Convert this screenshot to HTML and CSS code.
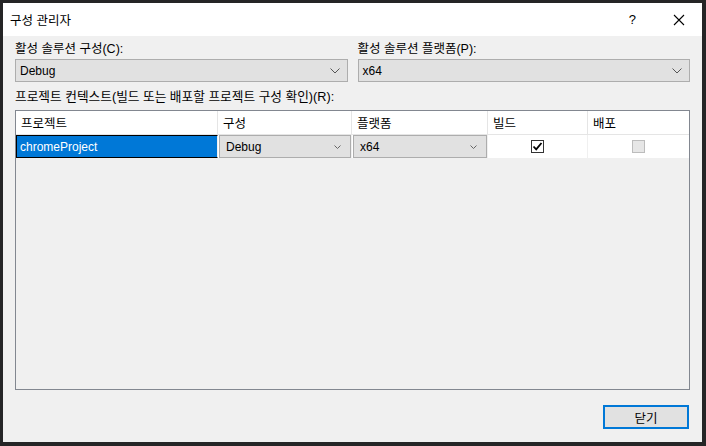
FILE: index.html
```html
<!DOCTYPE html>
<html lang="ko">
<head>
<meta charset="UTF-8">
<title>구성 관리자</title>
<link rel="stylesheet" href="styles.css">
</head>
<body>
  <div class="dialog">
    <!-- title bar -->
    <div class="titlebar">
      <span class="title">구성 관리자</span>
      <span class="help">?</span>
      <svg class="close" width="12" height="12" viewBox="0 0 12 12"><path d="M1 1 L11 11 M11 1 L1 11" stroke="#000" stroke-width="1.1" fill="none"/></svg>
    </div>

    <div class="content">
      <div class="fields">
        <div class="field">
          <label>활성 솔루션 구성(C):</label>
          <div class="select">
            <span>Debug</span>
            <svg width="10" height="6" viewBox="0 0 10 6"><path d="M0.5 0.5 L5 5 L9.5 0.5" stroke="#555" fill="none"/></svg>
          </div>
        </div>
        <div class="field">
          <label>활성 솔루션 플랫폼(P):</label>
          <div class="select">
            <span>x64</span>
            <svg width="10" height="6" viewBox="0 0 10 6"><path d="M0.5 0.5 L5 5 L9.5 0.5" stroke="#555" fill="none"/></svg>
          </div>
        </div>
      </div>

      <label class="context-label">프로젝트 컨텍스트(빌드 또는 배포할 프로젝트 구성 확인)(R):</label>

      <div class="grid">
        <div class="row header">
          <div class="cell">프로젝트</div>
          <div class="cell">구성</div>
          <div class="cell">플랫폼</div>
          <div class="cell">빌드</div>
          <div class="cell">배포</div>
        </div>
        <div class="row data">
          <div class="cell selected">chromeProject</div>
          <div class="cell">
            <div class="combo">
              <span>Debug</span>
              <svg width="7" height="4" viewBox="0 0 7 4"><path d="M0.5 0.5 L3.5 3.5 L6.5 0.5" stroke="#666" fill="none"/></svg>
            </div>
          </div>
          <div class="cell">
            <div class="combo">
              <span>x64</span>
              <svg width="7" height="4" viewBox="0 0 7 4"><path d="M0.5 0.5 L3.5 3.5 L6.5 0.5" stroke="#666" fill="none"/></svg>
            </div>
          </div>
          <div class="cell center">
            <div class="check checked">
              <svg width="11" height="11" viewBox="0 0 11 11"><path d="M1.5 5.5 L4.2 8.3 L9.5 2" stroke="#000" stroke-width="1.8" fill="none"/></svg>
            </div>
          </div>
          <div class="cell center">
            <div class="check disabled"></div>
          </div>
        </div>
      </div>

      <div class="footer">
        <button class="close-button">닫기</button>
      </div>
    </div>
  </div>
</body>
</html>
```

FILE: styles.css
```css
body {
  margin: 0;
  padding: 3px 4px 4px 3px;
  background: #252526;
  font-family: "Liberation Sans", "Noto Sans CJK KR", sans-serif;
  font-size: 12px;
  color: #000;
}
.dialog {
  width: 699px;
  height: 439px;
  background: #f0f0f0;
  display: flex;
  flex-direction: column;
}
.titlebar {
  height: 33px;
  background: #fff;
  display: flex;
  align-items: center;
  padding-left: 7px;
  padding-right: 17px;
}
.title {
  flex: 1;
  font-size: 12.5px;
}
.help {
  font-size: 13px;
  margin-right: 37px;
}
.content {
  flex: 1;
  display: flex;
  flex-direction: column;
  padding: 5px 12px 13px 12px;
}
.fields {
  display: flex;
  gap: 10px;
}
.field {
  flex: 1;
  display: flex;
  flex-direction: column;
}
.field label {
  height: 18px;
  line-height: 16px;
  font-size: 12.5px;
}
.select {
  height: 21px;
  border: 1px solid #adadad;
  background: #e1e1e1;
  display: flex;
  align-items: center;
  justify-content: space-between;
  padding: 0 7px 0 4px;
}
.context-label {
  margin-top: 7px;
  height: 21px;
  line-height: 16px;
  font-size: 12.7px;
}
.grid {
  height: 278px;
  border: 1px solid #828790;
  background: #f0f0f0;
}
.row {
  display: grid;
  grid-template-columns: 202px 134px 136px 100px 1fr;
  background: #fff;
}
.row.header {
  height: 23px;
  border-bottom: 1px solid #e5e5e5;
  font-size: 12.5px;
}
.row.header .cell {
  border-right: 1px solid #e5e5e5;
  padding-left: 5px;
  display: flex;
  align-items: center;
}
.row.header .cell:last-child {
  border-right: none;
}
.row.data {
  height: 23px;
}
.row.data .cell {
  display: flex;
  align-items: stretch;
  border-right: 1px solid #f0f0f0;
}
.row.data .cell:last-child {
  border-right: none;
}
.cell.selected {
  background: #0078d7;
  color: #fff;
  border: 1px solid #000;
  padding-left: 3px;
  align-items: center !important;
}
.combo {
  flex: 1;
  margin-left: 1px;
  border: 1px solid #adadad;
  background: #e1e1e1;
  display: flex;
  align-items: center;
  justify-content: space-between;
  padding: 0 9px 0 6px;
}
.cell.center {
  justify-content: center;
  align-items: center !important;
}
.check {
  width: 11px;
  height: 11px;
  border: 1px solid #333;
  background: #fff;
  display: flex;
  align-items: center;
  justify-content: center;
}
.check.disabled {
  border-color: #bcbcbc;
  background: #e6e6e6;
}
.footer {
  flex: 1;
  display: flex;
  justify-content: flex-end;
  align-items: flex-end;
}
.close-button {
  width: 86px;
  height: 24px;
  margin-right: 1px;
  border: 2px solid #0078d7;
  background: #e1e1e1;
  font-family: "Noto Sans CJK KR", sans-serif;
  font-size: 12.5px;
  padding: 0;
}
```
